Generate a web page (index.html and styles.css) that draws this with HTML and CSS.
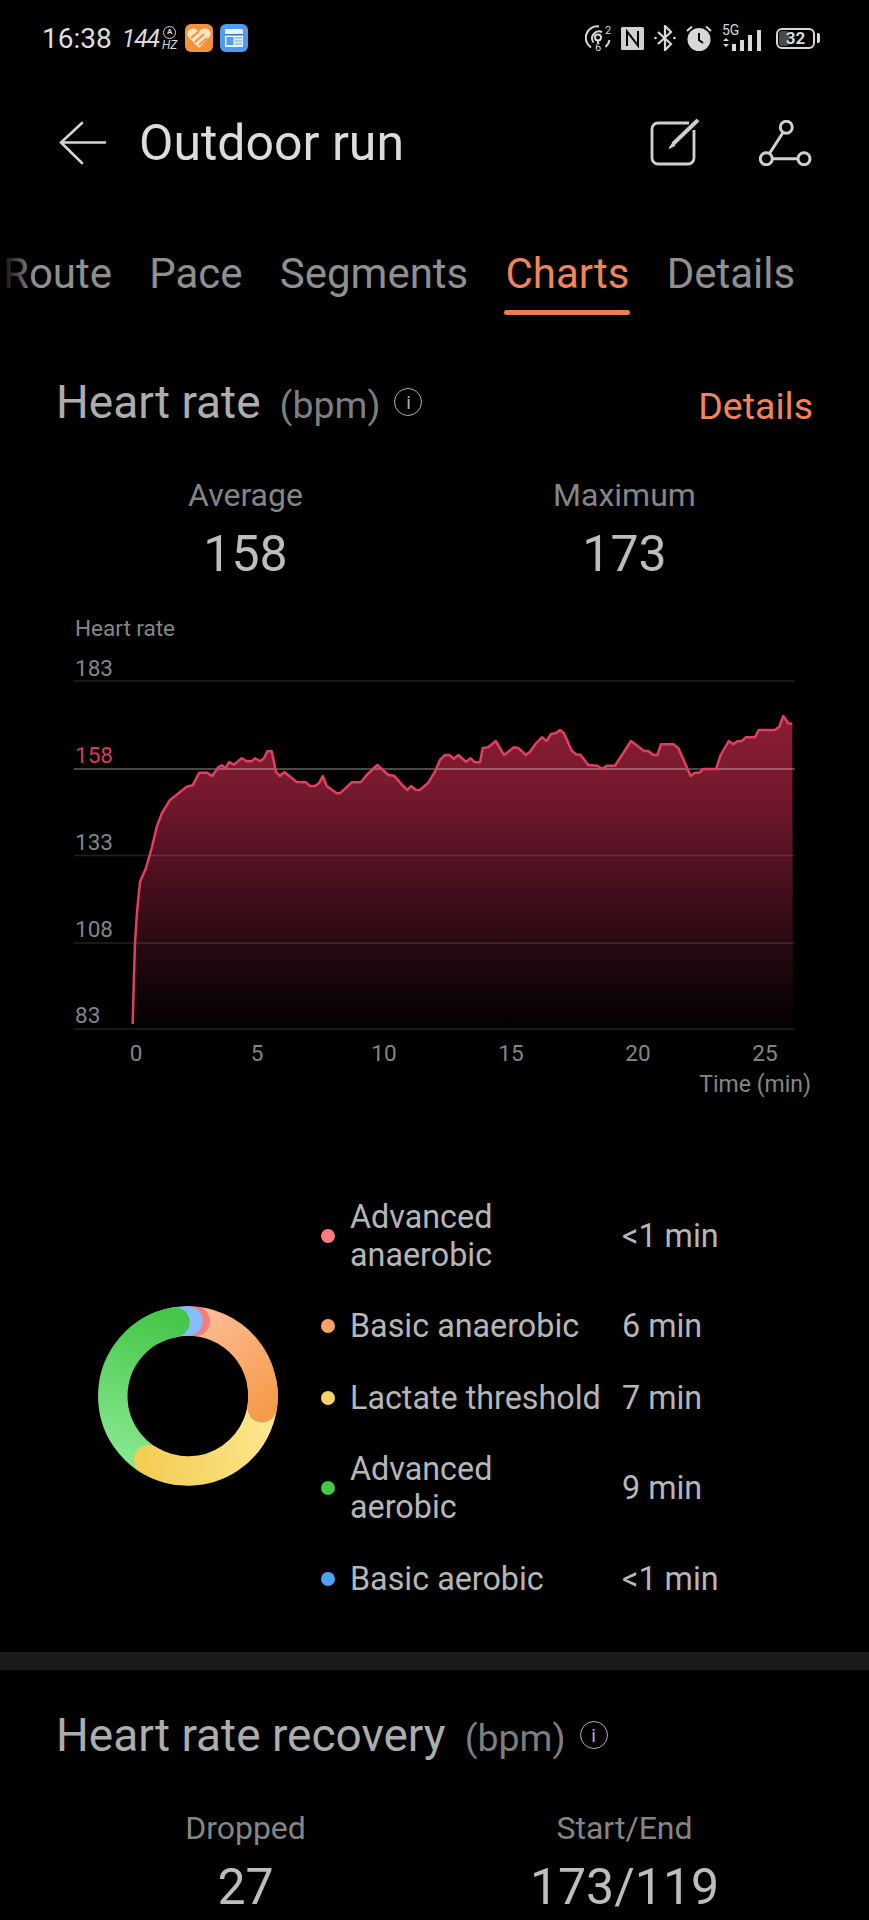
FILE: index.html
```html
<!DOCTYPE html>
<html>

<head>
  <title>Outdoor run</title>
  <link rel="stylesheet" href="styles.css">
</head>

<body>
  <div class="status-bar">
    <span class="clock">16:38</span>
    <span class="refresh"><i>144</i><span class="refresh-unit"><b>A</b><i>HZ</i></span></span>
    <svg class="app-icon" width="28" height="28" viewBox="0 0 28 28">
      <rect width="28" height="28" rx="6" fill="#f2923a" />
      <path d="M14 24 3.500 13C1 9.500 3 4.500 8 4.500c2.500 0 4.500 1 6 3 1.500-2 3.500-3 6-3 5 0 7 5 4.500 8.500z" fill="#fbe3c4" />
      <path d="M6 14 14 7M10 18 19 10M14 21 22 14" stroke="#f2923a" stroke-width="2" />
    </svg>
    <svg class="app-icon" width="28" height="28" viewBox="0 0 28 28">
      <rect width="28" height="28" rx="6" fill="#4f9cf0" />
      <rect x="5" y="5" width="18" height="18" rx="1" fill="#e8f2fd" />
      <rect x="5" y="10" width="18" height="1.500" fill="#2f78c8" />
      <rect x="6.500" y="13" width="7" height="8" fill="#4f9cf0" />
      <path d="M15 14h7M15 17h7M15 20h7" stroke="#4f9cf0" stroke-width="1.200" />
    </svg>
    <span class="status-right">
      <svg class="wifi" width="27" height="30" viewBox="0 -2 27 30" fill="none" stroke="#d8d8d8" stroke-width="2">
        <path d="M6 22.500A11.500 11.500 0 0 1 14 1.500M24.500 15a11.500 11.500 0 0 1-4 7" />
        <path d="M8.500 17.500A7 7 0 0 1 17 7" />
        <circle cx="13" cy="12.500" r="3" />
        <path d="M13 15.500v3" />
        <text class="wifi-text" x="20" y="9">2</text>
        <text class="wifi-text" x="10" y="25.500">6</text>
      </svg>
      <svg class="nfc" width="23" height="23" viewBox="0 0 23 23">
        <rect width="23" height="23" rx="1.500" fill="#d0d0d0" />
        <path d="M6 19V4.500l11 14V4" fill="none" stroke="#000" stroke-width="2" />
      </svg>
      <svg class="bt" width="22" height="26" viewBox="0 0 22 26" fill="none" stroke="#d8d8d8" stroke-width="2.200">
        <path d="M4 7l13 12-6 6V1l6 6L4 19" />
        <circle cx="1.500" cy="13" r="1.300" fill="#d8d8d8" stroke="none" />
        <circle cx="20.500" cy="13" r="1.300" fill="#d8d8d8" stroke="none" />
      </svg>
      <svg width="26" height="26" viewBox="0 0 26 26">
        <circle cx="13" cy="14.500" r="11.500" fill="#d8d8d8" />
        <path d="M13 8v7l4 3" fill="none" stroke="#000" stroke-width="2" />
        <path d="M1 6 6 1.500M25 6 20 1.500" stroke="#d8d8d8" stroke-width="2" />
      </svg>
      <span class="signal">
        <span class="signal-type">5G</span>
        <svg width="41" height="21" viewBox="0 0 41 21" fill="#d8d8d8">
          <path d="M1 11h6l-3-3zM1 14h6l-3 3z" />
          <rect x="10" y="14" width="4" height="7" />
          <rect x="18" y="10" width="4" height="11" />
          <rect x="26" y="5" width="4" height="16" />
          <rect x="35" y="0" width="4" height="21" />
        </svg>
      </span>
      <span class="battery"><span class="battery-fill"></span><b>32</b></span>
      <span class="battery-tip"></span>
    </span>
  </div>

  <div class="title-bar">
    <svg class="back" width="48" height="44" viewBox="0 0 48 44" fill="none" stroke="#d4d4d4" stroke-width="2.600" stroke-linecap="round">
      <path d="M23 2 2 21.500 23 42M2 21.500h44" />
    </svg>
    <h1>Outdoor run</h1>
    <svg class="edit" width="49" height="48" viewBox="0 0 49 48" fill="none" stroke="#cfcfcf" stroke-width="2.800">
      <path d="M44 11v28a6 6 0 0 1-6 6H8a6 6 0 0 1-6-6V10a6 6 0 0 1 6-6h31" />
      <path d="M48 1 23 25" stroke-width="4" />
      <path d="M22.500 24 19 29.500 25 26.500z" fill="#cfcfcf" stroke-width="1" />
    </svg>
    <svg class="share" width="54" height="46" viewBox="0 0 54 46" fill="none" stroke="#cfcfcf" stroke-width="3">
      <circle cx="28.300" cy="7.300" r="6" />
      <circle cx="8.300" cy="38.700" r="6" />
      <circle cx="46" cy="38.700" r="6" />
      <path d="M25 12.500 11.500 33.500M14.500 38.700H40" />
    </svg>
  </div>

  <div class="tabs">
    <span class="tab">Route</span>
    <span class="tab">Pace</span>
    <span class="tab">Segments</span>
    <span class="tab active">Charts</span>
    <span class="tab">Details</span>
    <span class="tabs-fade"></span>
  </div>

  <section>
    <div class="section-head">
      <h2>Heart rate</h2>
      <span class="unit">(bpm)</span>
      <span class="info">i</span>
      <a class="details-link">Details</a>
    </div>
    <div class="stats">
      <div class="stat"><div class="stat-label">Average</div><div class="stat-value">158</div></div>
      <div class="stat"><div class="stat-label">Maximum</div><div class="stat-value">173</div></div>
    </div>

    <svg class="chart" width="869" height="500" viewBox="0 600 869 500">
      <defs>
        <linearGradient id="areaFill" x1="0" y1="716" x2="0" y2="1029" gradientUnits="userSpaceOnUse">
          <stop offset="0" stop-color="#8a1c34" />
          <stop offset="0.2" stop-color="#7a1a2e" />
          <stop offset="0.42" stop-color="#5a1224" />
          <stop offset="0.63" stop-color="#380c17" />
          <stop offset="0.72" stop-color="#2a0a12" />
          <stop offset="0.91" stop-color="#0c0305" />
          <stop offset="1" stop-color="#040102" />
        </linearGradient>
      </defs>
      <polygon class="area" points="132.700,1029 132.700,1024 134,975 135,943 137,912 140,882 146,868 152,847 157,826 162,813 170,800 186.700,786.700 192.700,785.300 199.300,772.700 206.700,772.700 212.300,776 218.300,767.300 221.700,765.300 225.700,768.300 229,762 234,764.700 241.700,758.300 246.700,761.300 251.700,761.300 255,758.300 260,761.300 264,758.300 267.300,751.300 271.700,751.300 276,772 280,776 284.300,772 296.700,782 306,782.300 310,786 315,786 319.300,782.700 322.700,776 326.700,786 336.700,793.300 340,793.300 351.700,782.300 360.700,782.300 366.700,775 377.300,765 388.300,775 394,775.700 401.700,784.300 407.300,790 411,786 416,790 420,790 428.300,782.700 435,771.700 440,760 445,755 449.300,755 454,758.700 458.300,755 466,761.700 470.700,758.300 475,762.300 480,762.300 482.700,748 488.300,747.300 495.700,741 504,755 514,747.300 518.300,748 526,755 530,751.700 536,743.300 542,737.300 546.700,741 551,734 555.700,733.300 560,730 564,733.300 571.700,750.700 576,754.300 580.700,755 588.300,765 597.300,765.700 602.300,769 606.700,765.700 615,765.700 631,741 644,751 648.300,751 653.300,755 657.300,755 661,744.300 673.300,744.300 678.300,748 690.700,776 695,772.700 699.300,772.700 703.300,769 716,769 720.700,755 728.700,741 733.300,744.300 737.300,741.300 741.700,741 746,737.300 755,737.300 758.700,730 775,730 779.300,726.700 783.300,716 788.300,723.300 792.300,723.700 793,1029" />
      <line class="grid" x1="74" y1="681" x2="795" y2="681" />
      <line class="grid-avg" x1="74" y1="769" x2="795" y2="769" />
      <line class="grid" x1="74" y1="855.500" x2="795" y2="855.500" />
      <line class="grid" x1="74" y1="943" x2="795" y2="943" />
      <line class="grid" x1="74" y1="1029" x2="795" y2="1029" />
      <polyline class="line" points="132.700,1024 134,975 135,943 137,912 140,882 146,868 152,847 157,826 162,813 170,800 186.700,786.700 192.700,785.300 199.300,772.700 206.700,772.700 212.300,776 218.300,767.300 221.700,765.300 225.700,768.300 229,762 234,764.700 241.700,758.300 246.700,761.300 251.700,761.300 255,758.300 260,761.300 264,758.300 267.300,751.300 271.700,751.300 276,772 280,776 284.300,772 296.700,782 306,782.300 310,786 315,786 319.300,782.700 322.700,776 326.700,786 336.700,793.300 340,793.300 351.700,782.300 360.700,782.300 366.700,775 377.300,765 388.300,775 394,775.700 401.700,784.300 407.300,790 411,786 416,790 420,790 428.300,782.700 435,771.700 440,760 445,755 449.300,755 454,758.700 458.300,755 466,761.700 470.700,758.300 475,762.300 480,762.300 482.700,748 488.300,747.300 495.700,741 504,755 514,747.300 518.300,748 526,755 530,751.700 536,743.300 542,737.300 546.700,741 551,734 555.700,733.300 560,730 564,733.300 571.700,750.700 576,754.300 580.700,755 588.300,765 597.300,765.700 602.300,769 606.700,765.700 615,765.700 631,741 644,751 648.300,751 653.300,755 657.300,755 661,744.300 673.300,744.300 678.300,748 690.700,776 695,772.700 699.300,772.700 703.300,769 716,769 720.700,755 728.700,741 733.300,744.300 737.300,741.300 741.700,741 746,737.300 755,737.300 758.700,730 775,730 779.300,726.700 783.300,716 788.300,723.300 792.300,723.700" />
      <text class="axis" x="75" y="636">Heart rate</text>
      <text class="axis" x="75" y="676">183</text>
      <text class="axis avg" x="75" y="763">158</text>
      <text class="axis" x="75" y="850">133</text>
      <text class="axis" x="75" y="937">108</text>
      <text class="axis" x="75" y="1023">83</text>
      <text class="axis mid" x="136" y="1061">0</text>
      <text class="axis mid" x="257" y="1061">5</text>
      <text class="axis mid" x="384" y="1061">10</text>
      <text class="axis mid" x="511" y="1061">15</text>
      <text class="axis mid" x="638" y="1061">20</text>
      <text class="axis mid" x="765" y="1061">25</text>
      <text class="axis end" x="811" y="1092">Time (min)</text>
    </svg>

    <div class="zones">
      <svg class="donut" width="180" height="180" viewBox="0 0 180 180" fill="none" stroke-width="29.500" stroke-linecap="round">
        <defs>
          <linearGradient id="greenFill" x1="90" y1="15" x2="40" y2="165" gradientUnits="userSpaceOnUse">
            <stop offset="0" stop-color="#45c648" />
            <stop offset="1" stop-color="#8aea92" />
          </linearGradient>
          <linearGradient id="yellowFill" x1="45" y1="150" x2="170" y2="110" gradientUnits="userSpaceOnUse">
            <stop offset="0" stop-color="#f4cd55" />
            <stop offset="1" stop-color="#fde78e" />
          </linearGradient>
          <linearGradient id="orangeFill" x1="100" y1="15" x2="165" y2="105" gradientUnits="userSpaceOnUse">
            <stop offset="0" stop-color="#fdbb90" />
            <stop offset="1" stop-color="#f59c4c" />
          </linearGradient>
        </defs>
        <path d="M77 163.900A75 75 0 0 1 77 16.100" stroke="url(#greenFill)" />
        <path d="M163.900 77A75 75 0 0 1 50.600 153.800" stroke="url(#yellowFill)" />
        <path d="M90 15A75 75 0 0 1 164.100 101.700" stroke="url(#orangeFill)" />
        <path d="M70.600 17.600A75 75 0 0 1 97.300 15.400" stroke="#f87c7c" />
        <path d="M70.600 17.600A75 75 0 0 1 90 15" stroke="#86bdff" />
        <path d="M52.500 25A75 75 0 0 1 77 16.100" stroke="url(#greenFill)" />
      </svg>
      <div class="zone-list">
        <div class="zone"><span class="dot dot-red"></span><span class="zone-name">Advanced<br>anaerobic</span><span class="zone-time">&lt;1 min</span></div>
        <div class="zone"><span class="dot dot-orange"></span><span class="zone-name">Basic anaerobic</span><span class="zone-time">6 min</span></div>
        <div class="zone"><span class="dot dot-yellow"></span><span class="zone-name">Lactate threshold</span><span class="zone-time">7 min</span></div>
        <div class="zone"><span class="dot dot-green"></span><span class="zone-name">Advanced<br>aerobic</span><span class="zone-time">9 min</span></div>
        <div class="zone"><span class="dot dot-blue"></span><span class="zone-name">Basic aerobic</span><span class="zone-time">&lt;1 min</span></div>
      </div>
    </div>
  </section>

  <div class="divider"></div>

  <section class="recovery-section">
    <div class="section-head">
      <h2>Heart rate recovery</h2>
      <span class="unit">(bpm)</span>
      <span class="info">i</span>
    </div>
    <div class="stats">
      <div class="stat"><div class="stat-label">Dropped</div><div class="stat-value">27</div></div>
      <div class="stat"><div class="stat-label">Start/End</div><div class="stat-value">173/119</div></div>
    </div>
  </section>
</body>

</html>
```

FILE: styles.css
```css
html,
body {
  height: 1920px;
  overflow: hidden;
}

body {
  margin: 0;
  background-color: #000;
  color: #d8d8d8;
  font-family: Roboto, "Noto Sans", sans-serif;
}

.status-bar {
  display: flex;
  align-items: center;
  height: 38px;
  padding: 19px 0 0 42px;
  gap: 8px;
}

.clock {
  font-size: 28px;
  color: #dedede;
  margin-right: 2px;
}

.refresh {
  display: flex;
  align-items: flex-end;
  font-size: 25px;
  letter-spacing: -1.200px;
  color: #d8d8d8;
}

.refresh-unit {
  display: flex;
  flex-direction: column;
  align-items: center;
  margin: 0 0 2px 3px;
  font-size: 12px;
  line-height: 12px;
  letter-spacing: 0;
}

.refresh-unit b {
  width: 13px;
  height: 13px;
  border: 1.500px solid #d8d8d8;
  border-radius: 50%;
  box-sizing: border-box;
  font-size: 8px;
  line-height: 10px;
  text-align: center;
}

.app-icon + .app-icon {
  margin-left: -1px;
}

.status-right {
  display: flex;
  align-items: center;
  margin-left: auto;
  margin-right: 49px;
  gap: 10px;
}

.wifi {
  margin-right: -1px;
}

.wifi-text {
  font-family: Roboto, sans-serif;
  font-size: 11px;
  fill: #d8d8d8;
  stroke: none;
}

.signal {
  position: relative;
  display: flex;
  align-items: flex-end;
  height: 26px;
}

.signal-type {
  position: absolute;
  left: 0;
  top: -2px;
  font-size: 14px;
  line-height: 14px;
}

.battery {
  position: relative;
  display: flex;
  align-items: center;
  justify-content: center;
  width: 39px;
  height: 21px;
  margin-left: 3px;
  box-sizing: border-box;
  border: 2px solid #d8d8d8;
  border-radius: 6px;
  font-size: 17px;
}

.battery b {
  position: relative;
  font-weight: 700;
}

.battery-fill {
  position: absolute;
  left: 1px;
  top: 1px;
  bottom: 1px;
  width: 10px;
  border-radius: 3px;
  background-color: #4a4a4a;
}

.battery-tip {
  width: 3px;
  height: 10px;
  margin-left: -8px;
  border-radius: 0 2px 2px 0;
  background-color: #d8d8d8;
}

.title-bar {
  display: flex;
  align-items: center;
  height: 48px;
  margin-top: 62px;
  padding-left: 59px;
}

.title-bar h1 {
  margin: 0 0 0 32px;
  font-size: 50px;
  font-weight: 400;
  color: #dcdcdc;
}

.edit {
  margin-left: auto;
}

.share {
  margin: 0 57px 0 59px;
}

.tabs {
  position: relative;
  display: flex;
  gap: 37.200px;
  height: 138px;
  margin-top: 70px;
  padding-left: 3px;
  overflow: hidden;
}

.tab {
  padding-top: 14px;
  font-size: 42px;
  line-height: 46px;
  color: #8f8f8f;
}

.tab.active {
  color: #f0845a;
}

.tab.active::after {
  content: "";
  display: block;
  height: 5px;
  margin: 13px -1px 0;
  border-radius: 3px;
  background-color: #ee7d50;
}

.tabs-fade {
  position: absolute;
  left: 0;
  top: 0;
  width: 34px;
  height: 100%;
  background: linear-gradient(to right, #000, rgba(0, 0, 0, 0));
}

.section-head {
  display: flex;
  align-items: baseline;
  padding: 0 56px;
}

.section-head h2 {
  margin: 0;
  font-size: 46px;
  font-weight: 400;
  color: #adadad;
}

.unit {
  margin-left: 19px;
  font-size: 37.500px;
  color: #7e7e7e;
}

.info {
  display: flex;
  align-items: center;
  justify-content: center;
  align-self: center;
  width: 28px;
  height: 28px;
  margin: 0 0 0 14px;
  border: 1.500px solid #b0b0b0;
  border-radius: 50%;
  box-sizing: border-box;
  font-size: 19px;
  color: #b0b0b0;
}

.details-link {
  align-self: flex-end;
  margin: 0 0 1.500px auto;
  font-size: 37.500px;
  color: #f0845a;
}

.stats {
  display: flex;
  margin-top: 46.500px;
  padding-left: 56px;
}

.stat {
  width: 379px;
  text-align: center;
}

.stat-label {
  font-size: 32px;
  line-height: 38px;
  color: #858585;
}

.stat-value {
  margin-top: 10px;
  font-size: 50px;
  line-height: 60px;
  color: #bdbdbd;
}

.chart {
  display: block;
  margin-top: 16px;
}

.chart text {
  font-family: Roboto, "Noto Sans", sans-serif;
}

.area {
  fill: url(#areaFill);
}

.line {
  fill: none;
  stroke: #e0405f;
  stroke-width: 2.500;
  stroke-linejoin: round;
}

.grid {
  stroke: rgba(255, 255, 255, 0.13);
  stroke-width: 1.500;
}

.grid-avg {
  stroke: rgba(255, 255, 255, 0.38);
  stroke-width: 1.500;
}

.axis {
  font-size: 22.500px;
  fill: #858585;
}

.axis.avg {
  fill: #d8395c;
}

.axis.mid {
  text-anchor: middle;
}

.axis.end {
  font-size: 23px;
  text-anchor: end;
}

.zones {
  display: flex;
  align-items: center;
  margin-top: 81.400px;
}

.donut {
  margin: 0 0 3.400px 98px;
}

.zone-list {
  margin-left: 43px;
}

.zone {
  display: flex;
  align-items: center;
  padding: 16.800px 0;
  font-size: 32.300px;
  line-height: 38px;
  color: #b6b6b6;
}

.zone-name {
  width: 272px;
}

.dot {
  width: 14px;
  height: 14px;
  margin-right: 15px;
  border-radius: 50%;
}

.dot-red { background-color: #f87c7c; }
.dot-orange { background-color: #fba364; }
.dot-yellow { background-color: #f8d464; }
.dot-green { background-color: #45c648; }
.dot-blue { background-color: #4ca2f5; }

.divider {
  height: 18px;
  margin-top: 37.500px;
  background-color: #1a1a1a;
}

.recovery-section {
  padding-top: 38px;
}
```
